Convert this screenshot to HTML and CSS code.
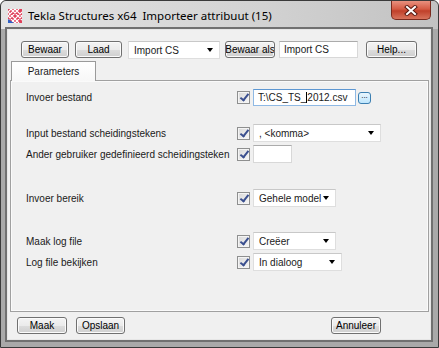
FILE: index.html
```html
<!DOCTYPE html>
<html lang="nl">
  <head>
    <meta charset="UTF-8" />
    <meta name="viewport" content="width=device-width, initial-scale=1.0" />
    <link rel="stylesheet" href="styles.css">
    <title>Importeer attribuut</title>
  </head>
  <body>
    <div class="window">
      <div class="titlebar">
        <svg class="app-icon" width="14" height="14" viewBox="0 0 14 14">
          <rect x="0" y="0" width="14" height="14" fill="#e0405a"/>
          <path d="M0 3 L3 0 M0 7 L7 0 M0 11 L11 0 M3 14 L14 3 M7 14 L14 7 M0 3 L11 14 M0 7 L7 14 M3 0 L14 11 M7 0 L14 7" stroke="#fff" stroke-width="1.1" fill="none"/>
          <path d="M0 10 L0 14 L6 14 Z" fill="#2d5fc4"/>
        </svg>
        <span class="title">Tekla Structures x64&nbsp; Importeer attribuut (15)</span>
        <div class="close">
          <svg width="14" height="11" viewBox="0 0 14 11">
            <path d="M3 2 L11 9 M11 2 L3 9" stroke="#5a1a12" stroke-width="4" stroke-linecap="square"/>
            <path d="M3 2 L11 9 M11 2 L3 9" stroke="#fff" stroke-width="2" stroke-linecap="square"/>
          </svg>
        </div>
      </div>

      <div class="client">
        <div class="toolbar">
          <div class="btn w-bewaar">Bewaar</div>
          <div class="btn w-laad">Laad</div>
          <div class="combo w-set">Import CS<i class="arrow"></i></div>
          <div class="btn w-saveas">Bewaar als</div>
          <div class="field w-name">Import CS</div>
          <div class="btn w-help">Help...</div>
        </div>

        <div class="tabs">
          <div class="tab active">Parameters</div>
        </div>

        <div class="panel">
          <div class="group">
            <div class="row">
              <span class="label">Invoer bestand</span>
              <span class="check"></span>
              <div class="with-browse">
                <div class="field focused w-file">T:\CS_TS_<span class="ibeam"></span>2012.csv</div>
                <div class="browse">...</div>
              </div>
            </div>
          </div>

          <div class="group gap-16">
            <div class="row">
              <span class="label">Input bestand scheidingstekens</span>
              <span class="check"></span>
              <div class="combo w-komma">, &lt;komma&gt;<i class="arrow"></i></div>
            </div>
            <div class="row">
              <span class="label">Ander gebruiker gedefinieerd scheidingsteken</span>
              <span class="check"></span>
              <div class="field w-small"></div>
            </div>
          </div>

          <div class="group gap-24">
            <div class="row">
              <span class="label">Invoer bereik</span>
              <span class="check"></span>
              <div class="combo w-model">Gehele model<i class="arrow"></i></div>
            </div>
          </div>

          <div class="group gap-23">
            <div class="row">
              <span class="label">Maak log file</span>
              <span class="check"></span>
              <div class="combo w-model">Creëer<i class="arrow"></i></div>
            </div>
            <div class="row">
              <span class="label">Log file bekijken</span>
              <span class="check"></span>
              <div class="combo w-dialog">In dialoog<i class="arrow"></i></div>
            </div>
          </div>
        </div>

        <div class="footer">
          <div class="btn w-maak">Maak</div>
          <div class="btn w-opslaan">Opslaan</div>
          <div class="btn w-annuleer">Annuleer</div>
        </div>
      </div>
    </div>
  </body>
</html>
```

FILE: styles.css
```css
body {
    margin: 0;
    background: #ffffff;
    font-family: "Liberation Sans", Arial, sans-serif;
    font-size: 10px;
    color: #1a1a1a;
}

/* venster */
.window {
    width: 439px;
    height: 348px;
    box-sizing: border-box;
    border: 1px solid #3a3a3a;
    border-radius: 6px 6px 0 0;
    background: #a9a9a9;
    padding: 0 7px 7px 6px;
    display: flex;
    flex-direction: column;
    overflow: hidden;
}
.titlebar {
    height: 28px;
    margin: 0 -7px 0 -6px;
    padding: 0 7px 0 7px;
    display: flex;
    align-items: center;
    background: linear-gradient(to right, #e4e4e4, #d2d2d2 60%, #c2c2c2);
    border-radius: 5px 5px 0 0;
}
.app-icon {
    display: block;
    margin-top: 1px;
}
.title {
    margin-left: 6px;
    font-family: "Noto Sans", "Liberation Sans", sans-serif;
    font-size: 11.5px;
    color: #000;
}
.close {
    margin-left: auto;
    align-self: flex-start;
    width: 40px;
    height: 19px;
    box-sizing: border-box;
    border: 1px solid #7a2a1e;
    border-top: none;
    border-radius: 0 0 5px 5px;
    background: linear-gradient(#e8917f, #d45a43 45%, #c0402a 55%, #d8735c);
    display: flex;
    align-items: center;
    justify-content: center;
}
.close svg {
    display: block;
}

.client {
    height: 311px;
    box-sizing: border-box;
    border: 1px solid #e6e6e6;
    box-shadow: 0 0 0 2px #707070;
    background: #f0f0f0;
    display: flex;
    flex-direction: column;
}

/* knoppen en velden */
.btn {
    height: 17px;
    box-sizing: border-box;
    border: 1px solid #707070;
    border-radius: 3px;
    background: linear-gradient(#f4f4f4, #ebebeb 50%, #dddddd 51%, #cfcfcf);
    box-shadow: inset 0 0 0 1px #fbfbfb;
    display: flex;
    align-items: center;
    justify-content: center;
    white-space: nowrap;
    overflow: hidden;
    color: #000;
}
.field {
    height: 17px;
    box-sizing: border-box;
    border: 1px solid #d8d8d8;
    border-top-color: #ababab;
    background: #fff;
    padding-left: 4px;
    display: flex;
    align-items: center;
    white-space: nowrap;
}
.field.focused {
    border-color: #8fb9e4;
    border-top-color: #5d97d2;
}
.combo {
    height: 18px;
    box-sizing: border-box;
    border: 1px solid #dedede;
    border-top-color: #c8c8c8;
    background: #fff;
    padding-left: 5px;
    display: flex;
    align-items: center;
    white-space: nowrap;
}
.arrow {
    margin-left: auto;
    margin-right: 6px;
    width: 0;
    height: 0;
    border-left: 3.5px solid transparent;
    border-right: 3.5px solid transparent;
    border-top: 4px solid #000;
}

/* bovenste balk */
.toolbar {
    display: flex;
    align-items: flex-start;
    padding: 11px 0 0 13px;
}
.w-bewaar { width: 48px; }
.w-laad { width: 47px; margin-left: 6px; }
.w-set { width: 92px; margin-left: 6px; }
.w-saveas { width: 50px; margin-left: 5px; }
.w-name { width: 79px; margin-left: 4px; }
.w-help { width: 51px; margin-left: 8px; }

/* tabblad */
.tabs {
    display: flex;
    margin: 2px 0 0 3px;
    height: 19px;
    position: relative;
    z-index: 1;
}
.tab {
    width: 85px;
    height: 20px;
    box-sizing: border-box;
    border: 1px solid #9a9a9a;
    border-bottom: none;
    background: linear-gradient(#ffffff, #f7f7f7);
    display: flex;
    align-items: center;
    justify-content: center;
    padding-bottom: 1px;
}

.panel {
    height: 232px;
    box-sizing: border-box;
    margin: 0 1px 0 2px;
    border: 1px solid #a0a0a0;
    box-shadow: inset 0 0 0 1px #fafafa;
    background: #f0f0f0;
    padding: 6px 0 0 15px;
}
.group {
    display: flex;
    flex-direction: column;
    gap: 1px;
}
.gap-16 { margin-top: 16px; }
.gap-24 { margin-top: 24px; }
.gap-23 { margin-top: 23px; }
.row {
    height: 20px;
    display: grid;
    grid-template-columns: 208px 13px max-content;
    column-gap: 3px;
    align-items: center;
}
.label {
    white-space: nowrap;
}
.check {
    width: 13px;
    height: 13px;
    box-sizing: border-box;
    border: 1px solid #8e8f8f;
    background: linear-gradient(135deg, #d8d8d8, #f7f7f7);
    box-shadow: inset 0 0 0 1px #f4f4f4;
    position: relative;
}
.check::after {
    content: "";
    position: absolute;
    left: 4px;
    top: 0;
    width: 3px;
    height: 7px;
    border: solid #3a4f8f;
    border-width: 0 2px 2px 0;
    transform: rotate(38deg);
}
.with-browse {
    display: flex;
    align-items: center;
    gap: 2px;
}
.w-file { width: 103px; }
.ibeam {
    display: inline-block;
    width: 1px;
    height: 11px;
    background: #000;
}
.browse {
    width: 13px;
    height: 12px;
    box-sizing: border-box;
    margin-top: 2px;
    border: 1px solid #3c7fb1;
    border-radius: 3px;
    background: linear-gradient(#eaf6fd, #bee6fd);
    font-size: 8px;
    line-height: 6px;
    text-align: center;
    color: #000;
}
.w-komma { width: 128px; }
.w-small { width: 39px; height: 18px; }
.w-model { width: 83px; }
.w-dialog { width: 89px; }

/* onderste balk */
.footer {
    display: flex;
    padding: 5px 49px 0 9px;
}
.w-maak { width: 50px; }
.w-opslaan { width: 49px; margin-left: 9px; }
.w-annuleer { width: 50px; margin-left: auto; }
```
